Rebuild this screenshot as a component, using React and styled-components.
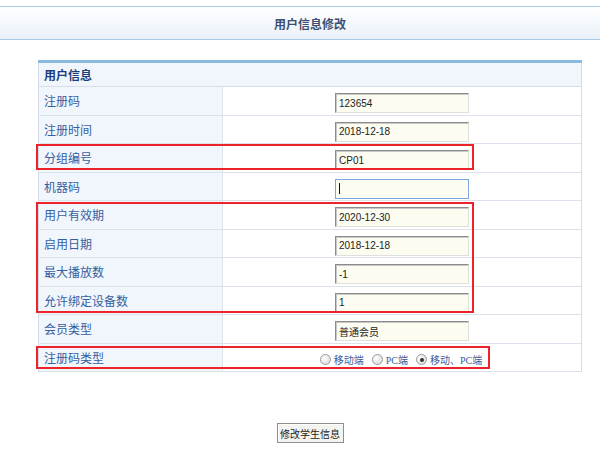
import React from "react";
import styled, { createGlobalStyle } from "styled-components";

const GlobalStyle = createGlobalStyle`
  body {
    margin: 0;
    background: #ffffff;
    font-family: "Noto Sans CJK SC", "Noto Sans", sans-serif;
  }
`;

const Page = styled.div`
  width: 600px;
  padding-top: 6px;
`;

const Header = styled.div`
  height: 32px;
  padding-left: 20px;
  display: flex;
  align-items: center;
  justify-content: center;
  border-top: 1px solid #a9cbe6;
  border-bottom: 1px solid #a9cbe6;
  background: linear-gradient(#ffffff, #eaf1f9);
  color: #3d4f70;
  font-size: 12px;
  font-weight: bold;
`;

const Content = styled.div`
  position: relative;
  width: 544px;
  margin: 20px 0 0 38px;
`;

const Table = styled.table`
  width: 544px;
  border-collapse: collapse;
  table-layout: fixed;
  border-left: 1px solid #d3dce8;
  border-right: 1px solid #d3dce8;
`;

const LabelCol = styled.col`
  width: 184px;
`;

const SectionHead = styled.td`
  height: 23px;
  padding: 0 0 0 5px;
  border-top: 3px solid #8bbadf;
  border-bottom: 1px solid #d6dfea;
  background: #f1f6fd;
  color: #1c3d78;
  font-size: 12px;
  font-weight: bold;
`;

const LabelCell = styled.td`
  height: 27.5px;
  padding: 0 0 0 5px;
  border-bottom: 1px solid #dbe2ec;
  border-right: 1px solid #dbe2ec;
  background: #f1f6fd;
  color: #35609f;
  font-size: 12px;
`;

const ValueCell = styled.td`
  height: 27.5px;
  padding: 0;
  border-bottom: 1px solid #dbe2ec;
  text-align: center;
  background: #ffffff;
`;

const Field = styled.span`
  display: inline-flex;
  align-items: center;
  box-sizing: border-box;
  width: 134px;
  height: 20px;
  padding-left: 3px;
  vertical-align: middle;
  text-align: left;
  background: #fcfcf1;
  border: 1px solid;
  border-color: ${(p) =>
    p.$focused ? "#7ea7e2" : "#8c8c8c #dedede #dedede #8c8c8c"};
  box-shadow: ${(p) => (p.$focused ? "none" : "inset 1px 1px 0 #c8c8c8")};
  color: #222222;
  font-family: "Liberation Sans", "Noto Sans CJK SC", sans-serif;
  font-size: 10px;
`;

const Caret = styled.span`
  width: 1px;
  height: 11px;
  background: #111111;
`;

const RadioGroup = styled.span`
  display: inline-flex;
  align-items: center;
  gap: 2px;
  vertical-align: middle;
  padding-left: 4px;
`;

const RadioOption = styled.label`
  display: inline-flex;
  align-items: center;
  gap: 3px;
  margin-right: 6px;
  color: #3a5d9c;
  font-family: "Liberation Serif", "Noto Sans CJK SC", serif;
  font-size: 10px;
`;

const RadioDot = styled.span`
  position: relative;
  box-sizing: border-box;
  width: 11px;
  height: 11px;
  border-radius: 50%;
  border: 1px solid #9c9c9c;
  background: radial-gradient(circle at 35% 35%, #ffffff, #d4d4d4);

  &::after {
    content: "";
    display: ${(p) => (p.$checked ? "block" : "none")};
    position: absolute;
    left: 2.5px;
    top: 2.5px;
    width: 4px;
    height: 4px;
    border-radius: 50%;
    background: #333333;
  }
`;

const Mark = styled.div`
  position: absolute;
  box-sizing: border-box;
  border: 2px solid #ec2328;
  pointer-events: none;
`;

const Footer = styled.div`
  display: flex;
  justify-content: center;
  width: 544px;
  margin: 51px 0 0 38px;
`;

const Button = styled.button`
  box-sizing: border-box;
  width: 67px;
  height: 20px;
  padding: 0;
  border: 1px solid #8e8e8e;
  box-shadow: inset 1px 1px 0 #ffffff;
  background: #f3f3ef;
  color: #222222;
  font-family: "Noto Sans CJK SC", sans-serif;
  font-size: 10px;
  cursor: pointer;
`;

const rows = [
  { label: "注册码", value: "123654" },
  { label: "注册时间", value: "2018-12-18" },
  { label: "分组编号", value: "CP01" },
  { label: "机器码", value: "", focused: true },
  { label: "用户有效期", value: "2020-12-30" },
  { label: "启用日期", value: "2018-12-18" },
  { label: "最大播放数", value: "-1" },
  { label: "允许绑定设备数", value: "1" },
  { label: "会员类型", value: "普通会员" },
];

const radios = [
  { label: "移动端", checked: false },
  { label: "PC端", checked: false },
  { label: "移动、PC端", checked: true },
];

const App = () => {
  return (
    <Page>
      <GlobalStyle />
      <Header>用户信息修改</Header>
      <Content>
        <Table>
          <colgroup>
            <LabelCol />
            <col />
          </colgroup>
          <thead>
            <tr>
              <SectionHead colSpan={2}>用户信息</SectionHead>
            </tr>
          </thead>
          <tbody>
            {rows.map((row) => (
              <tr key={row.label}>
                <LabelCell>{row.label}</LabelCell>
                <ValueCell>
                  <Field $focused={row.focused}>
                    {row.focused ? <Caret /> : row.value}
                  </Field>
                </ValueCell>
              </tr>
            ))}
            <tr>
              <LabelCell>注册码类型</LabelCell>
              <ValueCell>
                <RadioGroup>
                  {radios.map((r) => (
                    <RadioOption key={r.label}>
                      <RadioDot $checked={r.checked} />
                      {r.label}
                    </RadioOption>
                  ))}
                </RadioGroup>
              </ValueCell>
            </tr>
          </tbody>
        </Table>
        <Mark style={{ left: -2, top: 84, width: 438, height: 26 }} />
        <Mark style={{ left: -2, top: 142, width: 438, height: 111 }} />
        <Mark style={{ left: -2, top: 286, width: 454, height: 23 }} />
      </Content>
      <Footer>
        <Button>修改学生信息</Button>
      </Footer>
    </Page>
  );
};

export default App;
